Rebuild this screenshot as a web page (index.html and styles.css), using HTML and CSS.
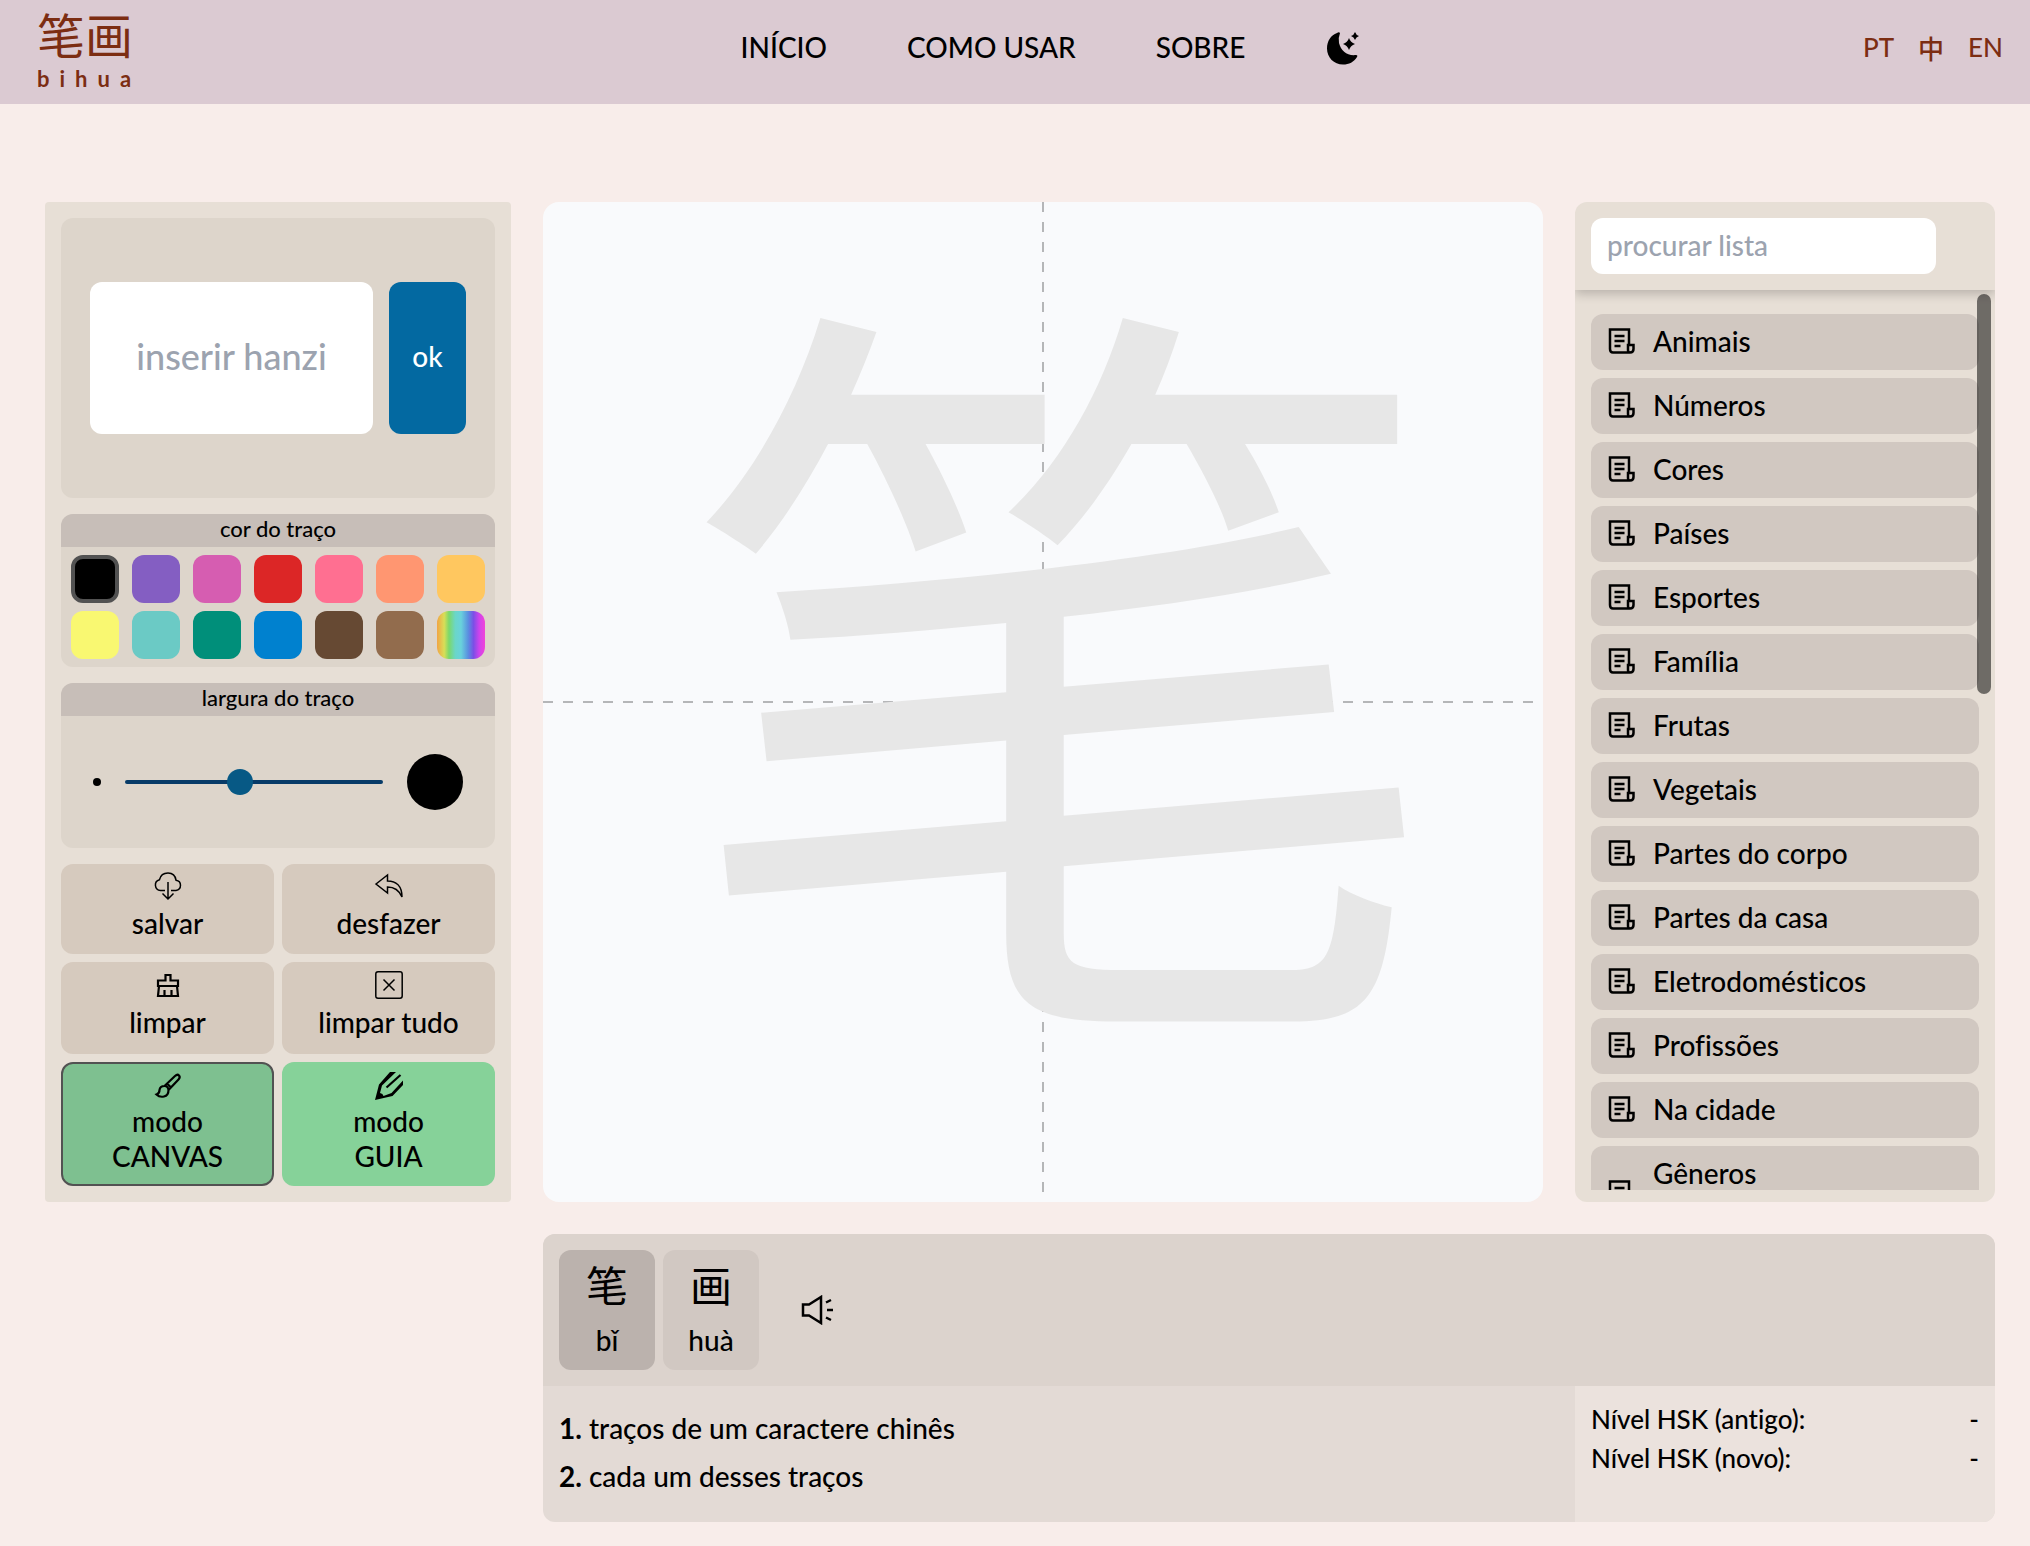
FILE: index.html
```html
<!DOCTYPE html>
<html lang="pt">
<head>
    <meta charset="UTF-8">
    <title>bihua</title>
    <link rel="stylesheet" href="styles.css">
</head>
<body>
    <header class="topbar">
        <a href="#" class="logo">
            <span class="logo-hanzi">笔画</span>
            <span class="logo-name">bihua</span>
        </a>
        <nav class="menu">
            <a href="#">INÍCIO</a>
            <a href="#">COMO USAR</a>
            <a href="#">SOBRE</a>
            <button class="theme-btn" aria-label="tema escuro">
                <svg width="36" height="36" viewBox="0 0 36 36">
                    <path d="M12 4Q14 2.500 15 4 13 9 14 14C16 22 22 27 31 26Q33 26 32 28C29 33 24 35.500 18 35.500 9 35.500 2 28.500 2 19.500 2 12 6 6 12 4z"/>
                    <path d="M24 9q1.500 4.500 6 6-4.500 1.500-6 6-1.500-4.500-6-6 4.500-1.500 6-6zM30 3q1 3 4 4-3 1-4 4-1-3-4-4 3-1 4-4z"/>
                </svg>
            </button>
        </nav>
        <div class="langs">
            <a href="#">PT</a>
            <a href="#">中</a>
            <a href="#">EN</a>
        </div>
    </header>

    <main class="page">
        <section class="tools">
            <form class="box hanzi-form">
                <input type="text" class="hanzi-input" placeholder="inserir hanzi" aria-label="inserir hanzi">
                <button type="button" class="ok-btn">ok</button>
            </form>

            <div class="box">
                <h2 class="box-title">cor do traço</h2>
                <div class="colors">
                    <button class="color black selected" aria-label="preto"></button>
                    <button class="color purple" aria-label="roxo"></button>
                    <button class="color magenta" aria-label="magenta"></button>
                    <button class="color red" aria-label="vermelho"></button>
                    <button class="color pink" aria-label="rosa"></button>
                    <button class="color orange" aria-label="laranja"></button>
                    <button class="color amber" aria-label="âmbar"></button>
                    <button class="color yellow" aria-label="amarelo"></button>
                    <button class="color aqua" aria-label="turquesa"></button>
                    <button class="color green" aria-label="verde"></button>
                    <button class="color blue" aria-label="azul"></button>
                    <button class="color brown" aria-label="marrom"></button>
                    <button class="color tan" aria-label="castanho"></button>
                    <button class="color rainbow" aria-label="arco-íris"></button>
                </div>
            </div>

            <div class="box">
                <h2 class="box-title"><label for="stroke-width">largura do traço</label></h2>
                <div class="width-row">
                    <span class="dot-small"></span>
                    <input type="range" id="stroke-width" min="0" max="100" value="44">
                    <span class="dot-big"></span>
                </div>
            </div>

            <div class="actions">
                <button class="action">
                    <svg width="28" height="28" viewBox="0 0 28 28">
                        <path d="M11 18.500H6.500A5.500 5.500 0 0 1 5.500 7.700Q7 1 14 1 21 1 22 8.200A5.200 5.200 0 0 1 22 18.500H17M14 10v17M8.500 21.500L14 27l5.500-5.500"/>
                    </svg>
                    salvar
                </button>
                <button class="action">
                    <svg width="28" height="28" viewBox="0 0 28 28">
                        <path d="M1 12L12.500 3v6C21 9 27 14 27 25 24 18 20 15 12.500 15v6z"/>
                    </svg>
                    desfazer
                </button>
                <button class="action">
                    <svg class="thick" width="28" height="28" viewBox="0 0 28 28">
                        <path d="M4 15V9.500H11.500V4h5v5.500H24V15zM5 15L4 25H24L23 15M10.500 25v-6M17.500 25v-6"/>
                    </svg>
                    limpar
                </button>
                <button class="action">
                    <svg width="28" height="28" viewBox="0 0 28 28">
                        <path d="M3 .8H25Q27.200.8 27.200 3V25Q27.200 27.200 25 27.200H3Q.8 27.200.8 25V3Q.8.8 3 .8zM8.500 8.500l11 11M19.500 8.500l-11 11"/>
                    </svg>
                    limpar tudo
                </button>
                <button class="action mode selected">
                    <svg class="thick" width="28" height="28" viewBox="0 0 28 28">
                        <path d="M10.500 14L21 4Q23.500 1.800 25 3.500 26.600 5.200 24.500 7.500L14.500 18M10.500 14Q14 14 14.500 18M13 11.500L17 15.500M10.500 14Q6 14 5.500 18 5.500 21.500 2.500 22.500 5.500 25.500 10 24.500 14.500 23.500 14.500 18"/>
                    </svg>
                    <span>modo<br>CANVAS</span>
                </button>
                <button class="action mode guide">
                    <svg class="solid" width="28" height="28" viewBox="0 0 28 28">
                        <path d="M0 28L4 12.500 15 0H21L7 13.500 5 21Q8 21.500 8.500 24L16.500 21 28 8.500V13L17.500 24z"/>
                        <path d="M11.500 15.500L25.500 3" fill="none" stroke="#000" stroke-width="2.200"/>
                    </svg>
                    <span>modo<br>GUIA</span>
                </button>
            </div>
        </section>

        <section class="board">
            <svg viewBox="0 0 1000 1000">
                <g class="guides">
                    <path d="M0 500H1000M500 0V1000"/>
                </g>
                <text class="guide-hanzi" x="520" y="765">笔</text>
            </svg>
        </section>

        <aside class="lists">
            <div class="search">
                <input type="text" placeholder="procurar lista" aria-label="procurar lista">
            </div>
            <div class="list-scroll">
                <div class="list-items" id="list-items"></div>
            </div>
            <div class="scroll-thumb"></div>
        </aside>

        <section class="info">
            <div class="word">
                <button class="syllable selected"><span class="hanzi">笔</span>bǐ</button>
                <button class="syllable"><span class="hanzi">画</span>huà</button>
                <button class="audio-btn" aria-label="ouvir">
                    <svg width="34" height="30" viewBox="0 0 34 30">
                        <path d="M2 9.500V20.500H8L20 28V2L8 9.500zM25 7.500l5-2.500M26 15h6M25 22.500l5 2.500"/>
                    </svg>
                </button>
            </div>
            <div class="details">
                <ol class="meanings">
                    <li><b>1.</b> traços de um caractere chinês</li>
                    <li><b>2.</b> cada um desses traços</li>
                </ol>
                <dl class="levels">
                    <div><dt>Nível HSK (antigo):</dt><dd>-</dd></div>
                    <div><dt>Nível HSK (novo):</dt><dd>-</dd></div>
                </dl>
            </div>
        </section>
    </main>

    <script src="script.js"></script>
</body>
</html>
```

FILE: styles.css
```css
* {
    box-sizing: border-box;
}

body {
    margin: 0;
    background: #f8edea;
    color: #000;
    font-family: Lato, 'Noto Sans CJK SC', sans-serif;
    font-size: 28px;
    font-weight: 500;
    font-variant-ligatures: none;
}

a {
    color: inherit;
    text-decoration: none;
}

button, input {
    font: inherit;
    color: inherit;
    border: none;
}

button {
    padding: 0;
    background: none;
    cursor: pointer;
}

svg {
    display: block;
}

/* header */
.topbar {
    display: grid;
    grid-template-columns: 1fr auto 1fr;
    height: 104px;
    padding: 0 27px 0 37px;
    background: #dbcad2;
}

.logo {
    display: flex;
    flex-direction: column;
    padding-top: 8px;
    color: #7c2d12;
}

.logo-hanzi {
    font-size: 48px;
    line-height: 56px;
    font-weight: 400;
}

.logo-name {
    font-size: 22px;
    line-height: 30px;
    font-weight: bold;
    letter-spacing: 10px;
}

.menu {
    display: flex;
    align-items: center;
    gap: 80px;
    height: 94px;
    padding-left: 62px;
}

.theme-btn {
    width: 36px;
}

.langs {
    display: flex;
    align-items: center;
    justify-content: flex-end;
    gap: 24px;
    height: 94px;
    font-size: 26px;
    color: #7c2d12;
}

/* page */
.page {
    display: grid;
    grid-template-columns: 466px 1fr 420px;
    gap: 32px;
    padding: 98px 35px 24px 45px;
}

/* left panel */
.tools {
    display: flex;
    flex-direction: column;
    gap: 16px;
    padding: 16px;
    background: #e7dfd6;
    border-radius: 4px;
}

.box {
    background: #ddd5cb;
    border-radius: 12px;
    overflow: hidden;
}

.box-title {
    margin: 0;
    padding-bottom: 3px;
    background: #c7beb8;
    font-size: 22px;
    line-height: 30px;
    font-weight: 500;
    text-align: center;
}

.hanzi-form {
    display: flex;
    align-items: center;
    gap: 16px;
    height: 280px;
    padding: 0 29px;
}

.hanzi-input {
    flex: 1;
    min-width: 0;
    height: 152px;
    padding: 0 16px 4px;
    border-radius: 12px;
    font-size: 36px;
    text-align: center;
    background: #fff;
}

::placeholder {
    color: #9ca3af;
    opacity: 1;
}

.ok-btn {
    width: 77px;
    height: 152px;
    padding-bottom: 4px;
    border-radius: 12px;
    background: #0369a1;
    color: #fff;
}

.colors {
    display: grid;
    grid-template-columns: repeat(7, 48px);
    justify-content: space-between;
    row-gap: 8px;
    padding: 8px 10px;
}

.color {
    height: 48px;
    border-radius: 12px;
}

.color.selected {
    border: 4px solid #525252;
}

.black { background: #000; }
.purple { background: #845ec2; }
.magenta { background: #d65db1; }
.red { background: #dc2626; }
.pink { background: #ff6f91; }
.orange { background: #ff9671; }
.amber { background: #ffc75f; }
.yellow { background: #f9f871; }
.aqua { background: #6bcac5; }
.green { background: #008f7a; }
.blue { background: #0081cf; }
.brown { background: #664933; }
.tan { background: #926c4d; }

.rainbow {
    background: linear-gradient(90deg, #f2a444, #d8de57 15%, #7bd86b 25%, #6bd6c8 38%, #69d2dc 50%, #5a8fe0 65%, #7b4fe6 76%, #cf43ec 88%, #f044d8);
}

.width-row {
    display: flex;
    align-items: center;
    gap: 24px;
    height: 132px;
    padding: 0 32px;
}

.dot-small {
    width: 8px;
    height: 8px;
    border-radius: 50%;
    background: #000;
}

.dot-big {
    width: 56px;
    height: 56px;
    border-radius: 50%;
    background: #000;
}

#stroke-width {
    flex: 1;
    min-width: 0;
    height: 4px;
    margin: 0;
    border-radius: 2px;
    background: #073b68;
    appearance: none;
}

#stroke-width::-webkit-slider-thumb {
    width: 26px;
    height: 26px;
    border-radius: 50%;
    background: #075985;
    appearance: none;
}

.actions {
    display: grid;
    grid-template-columns: 1fr 1fr;
    grid-template-rows: 90px 92px 124px;
    gap: 8px;
}

.action {
    display: flex;
    flex-direction: column;
    align-items: center;
    justify-content: center;
    gap: 6px;
    padding-bottom: 6px;
    border-radius: 12px;
    background: #d6cabe;
    line-height: 35px;
}

.action svg {
    fill: none;
    stroke: #000;
    stroke-width: 1.5;
    overflow: visible;
}

.action .thick {
    stroke-width: 2.2;
}

.action .solid {
    fill: #000;
    stroke: none;
}

.action.mode {
    gap: 4px;
    padding-bottom: 2px;
    background: #7ec090;
}

.action.mode.selected {
    border: 2px solid #525252;
}

.action.guide {
    background: #86d299;
}

/* drawing board */
.board {
    aspect-ratio: 1;
    border-radius: 16px;
    background: #f9fafc;
    overflow: hidden;
}

.guides {
    fill: none;
    stroke: #b5b6b8;
    stroke-width: 2;
    stroke-dasharray: 10 10;
}

.guide-hanzi {
    fill: #e7e7e7;
    font-family: 'Noto Sans CJK SC', sans-serif;
    font-size: 768px;
    font-weight: 400;
    text-anchor: middle;
}

/* word lists */
.lists {
    position: relative;
    display: flex;
    flex-direction: column;
    padding-bottom: 12px;
    border-radius: 12px;
    background: #e7dfd6;
    overflow: hidden;
}

.search {
    padding: 16px;
    box-shadow: 0 4px 10px rgba(0, 0, 0, 0.2);
}

.search input {
    display: block;
    width: 345px;
    height: 56px;
    padding: 0 16px 2px;
    border-radius: 12px;
    background: #fff;
}

.list-scroll {
    flex: 1 1 0;
    min-height: 0;
    overflow: hidden;
}

.list-items {
    display: flex;
    flex-direction: column;
    gap: 8px;
    padding: 24px 16px 0;
}

.list-item {
    display: flex;
    flex-shrink: 0;
    align-items: center;
    gap: 18px;
    padding: 7px 16px 9px;
    border-radius: 12px;
    background: #d1c8c1;
    line-height: 40px;
    text-align: left;
}

.list-item svg {
    fill: none;
    stroke: #000;
    stroke-width: 2.5;
}

.list-item.tall span {
    height: 80px;
}

.scroll-thumb {
    position: absolute;
    top: 92px;
    right: 4px;
    width: 14px;
    height: 400px;
    border-radius: 7px;
    background: rgba(0, 0, 0, 0.52);
}

/* word info */
.info {
    grid-column: 2 / 4;
    border-radius: 12px;
    background: #e3dad5;
    overflow: hidden;
}

.word {
    display: flex;
    align-items: center;
    gap: 8px;
    padding: 16px;
    background: #dcd3cd;
}

.syllable {
    display: flex;
    flex-direction: column;
    align-items: center;
    width: 96px;
    height: 120px;
    padding-top: 8px;
    border-radius: 12px;
    background: #d1c8c2;
    line-height: 36px;
}

.syllable.selected {
    background: #bbb2ad;
}

.hanzi {
    font-size: 42px;
    font-weight: 400;
    line-height: 56px;
    padding-bottom: 8px;
}

.audio-btn {
    padding: 0 34px;
}

.audio-btn svg {
    fill: none;
    stroke: #000;
    stroke-width: 2.5;
}

.details {
    display: grid;
    grid-template-columns: 1fr 420px;
    height: 136px;
}

.meanings {
    margin: 0;
    padding: 18px 16px;
    list-style: none;
    line-height: 48px;
}

.levels {
    margin: 0;
    padding: 14px 16px;
    background: #ebe2dd;
    font-size: 26px;
    line-height: 39px;
}

.levels div {
    display: flex;
    justify-content: space-between;
}

.levels dd {
    margin: 0;
}
```

FILE: script.js
```js
const lists = [
    'Animais', 'Números', 'Cores', 'Países', 'Esportes', 'Família', 'Frutas',
    'Vegetais', 'Partes do corpo', 'Partes da casa', 'Eletrodomésticos',
    'Profissões', 'Na cidade', 'Gêneros'
];

const icon = `<svg width="28" height="28" viewBox="0 0 28 28">
    <path d="M22 18V2.500H3V22Q3 25.500 6 25.500H23Q26.500 25.500 26.500 22V18H21V23Q21 25.500 23 25.500M7.500 9H17.500M7.500 14H17.500M7.500 19H13.500"/>
</svg>`;

const box = document.getElementById('list-items');

lists.forEach(name => {
    const item = document.createElement('button');
    item.className = name === 'Gêneros' ? 'list-item tall' : 'list-item';
    item.innerHTML = `${icon}<span>${name}</span>`;
    box.appendChild(item);
});
```
